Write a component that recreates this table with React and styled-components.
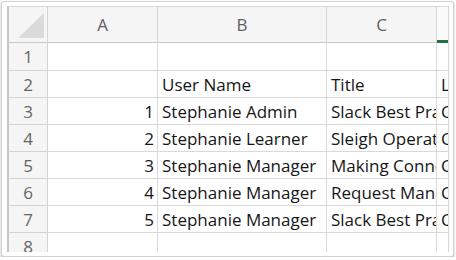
import React from "react";
import styled, { createGlobalStyle } from "styled-components";

const GlobalStyle = createGlobalStyle`
  body {
    margin: 0;
    background: #ffffff;
    font-family: "Open Sans", "Liberation Sans", sans-serif;
  }
`;

const columns = ["A", "B", "C", "D"];
const colWidths = [110, 169, 110, 100];

const rows = [
  { n: 1, cells: ["", "", "", ""] },
  { n: 2, cells: ["", "User Name", "Title", "L"] },
  { n: 3, cells: ["1", "Stephanie Admin", "Slack Best Practices", "C"] },
  { n: 4, cells: ["2", "Stephanie Learner", "Sleigh Operations", "C"] },
  { n: 5, cells: ["3", "Stephanie Manager", "Making Connections", "C"] },
  { n: 6, cells: ["4", "Stephanie Manager", "Request Management", "C"] },
  { n: 7, cells: ["5", "Stephanie Manager", "Slack Best Practices", "C"] },
  { n: 8, cells: ["", "", "", ""] },
];

function App() {
  return (
    <>
      <GlobalStyle />
      <Frame>
        <Sheet>
          <Grid>
            <Corner>
              <svg width="38" height="35" viewBox="0 0 38 35">
                <polygon points="9,31 35,6 35,31" fill="#dadada" />
              </svg>
            </Corner>
            {columns.map((c) => (
              <ColHead key={c} selected={c === "D"}>
                {c}
              </ColHead>
            ))}
            {rows.map((r) => (
              <React.Fragment key={r.n}>
                <RowHead>{r.n}</RowHead>
                {r.cells.map((v, i) => (
                  <Cell key={i} numeric={i === 0}>
                    {v}
                  </Cell>
                ))}
              </React.Fragment>
            ))}
          </Grid>
        </Sheet>
      </Frame>
    </>
  );
}

const Frame = styled.div`
  box-sizing: border-box;
  margin: 1px 0 0 1px;
  width: 453px;
  height: 256px;
  padding: 4px 4px 4px 5px;
  border: 1px solid #d2d2d2;
  border-radius: 3px;
  box-shadow: 0 1px 2px rgba(0, 0, 0, 0.35);
  background: #ffffff;
`;

const Sheet = styled.div`
  box-sizing: border-box;
  width: 442px;
  height: 246px;
  overflow: hidden;
  border-top: 1px solid #d6d6d6;
  border-left: 2px solid #c6c6c6;
  border-right: 1px solid #d6d6d6;
`;

const Grid = styled.div`
  display: grid;
  grid-template-columns: 39px ${colWidths.map((w) => w + "px").join(" ")};
  grid-template-rows: 36px 28px repeat(7, 27px);
`;

const HeadBase = styled.div`
  box-sizing: border-box;
  display: flex;
  align-items: center;
  justify-content: center;
  background: #f5f5f5;
  color: #5f5f5f;
  font-size: 17px;
  border-right: 1px solid #d4d4d4;
  border-bottom: 1px solid #d4d4d4;
`;

const Corner = styled(HeadBase)`
  align-items: stretch;
  justify-content: stretch;
  border-bottom-color: #c8c8c8;
`;

const ColHead = styled(HeadBase)`
  background: ${(p) => (p.selected ? "#fafafa" : "#f5f5f5")};
  border-bottom: ${(p) => (p.selected ? "3px solid #1e7145" : "1px solid #c8c8c8")};
  padding-top: ${(p) => (p.selected ? "2px" : "0")};
`;

const RowHead = styled(HeadBase)`
  color: #666666;
`;

const Cell = styled.div`
  box-sizing: border-box;
  overflow: hidden;
  white-space: nowrap;
  padding: 1px 3px 0 4px;
  display: flex;
  align-items: center;
  justify-content: ${(p) => (p.numeric ? "flex-end" : "flex-start")};
  font-size: 17px;
  color: #161616;
  border-right: 1px solid #d9d9d9;
  border-bottom: 1px solid #d9d9d9;
`;

export default App;
